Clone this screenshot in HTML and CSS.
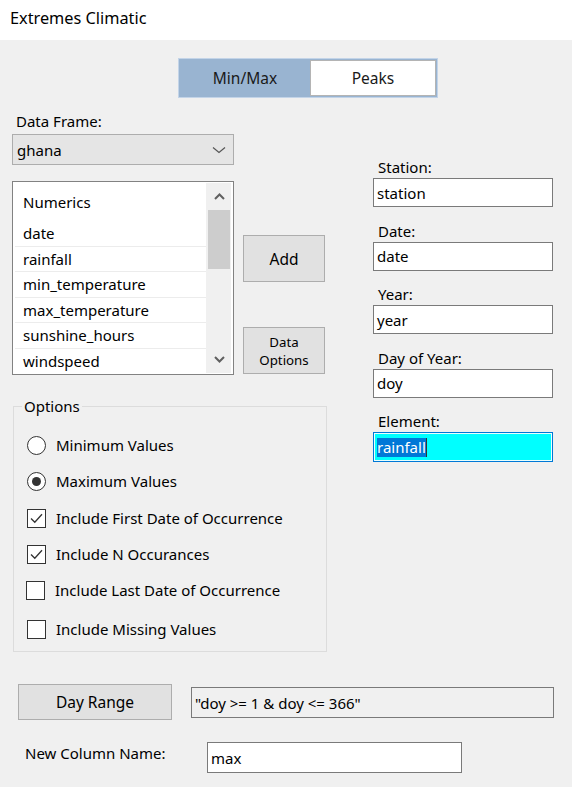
FILE: index.html
```html
<!DOCTYPE html>
<html>
<head>
<meta charset="utf-8">
<link rel="stylesheet" href="styles.css">
</head>
<body>
<div class="window">
  <div class="titlebar">Extremes Climatic</div>
  <div class="client">
    <div class="toggle">
      <div class="tab tab-active">Min/Max</div>
      <div class="tab tab-peaks">Peaks</div>
    </div>
    <div class="main">
      <div class="col-left">
        <div class="label">Data Frame:</div>
        <div class="combo">
          <span>ghana</span>
          <svg class="chev" width="14" height="8" viewBox="0 0 14 8"><path d="M1 1.5 L7 6.5 L13 1.5" fill="none" stroke="#555" stroke-width="1.2"/></svg>
        </div>
        <div class="listbox">
          <div class="list-items">
            <div class="list-header">Numerics</div>
            <div class="item">date</div>
            <div class="item">rainfall</div>
            <div class="item">min_temperature</div>
            <div class="item">max_temperature</div>
            <div class="item">sunshine_hours</div>
            <div class="item item-last">windspeed</div>
          </div>
          <div class="scrollbar">
            <div class="sb-btn"><svg width="11" height="7" viewBox="0 0 11 7"><path d="M1 6 L5.5 1.5 L10 6" fill="none" stroke="#606060" stroke-width="2"/></svg></div>
            <div class="sb-track"><div class="sb-thumb"></div></div>
            <div class="sb-btn"><svg width="11" height="7" viewBox="0 0 11 7"><path d="M1 1 L5.5 5.5 L10 1" fill="none" stroke="#606060" stroke-width="2"/></svg></div>
          </div>
        </div>
        <fieldset class="options">
          <legend>Options</legend>
          <div class="opts">
            <div class="opt"><span class="radio"></span><span>Minimum Values</span></div>
            <div class="opt"><span class="radio radio-on"><span class="dot"></span></span><span>Maximum Values</span></div>
            <div class="opt opt-gap1"><span class="check"><svg width="17" height="17" viewBox="0 0 17 17"><path d="M3 8.5 L6.8 12.3 L14 4.2" fill="none" stroke="#333" stroke-width="1.3"/></svg></span><span>Include First Date of Occurrence</span></div>
            <div class="opt"><span class="check"><svg width="17" height="17" viewBox="0 0 17 17"><path d="M3 8.5 L6.8 12.3 L14 4.2" fill="none" stroke="#333" stroke-width="1.3"/></svg></span><span>Include N Occurances</span></div>
            <div class="opt opt-shift"><span class="check"></span><span>Include Last Date of Occurrence</span></div>
            <div class="opt opt-gap3"><span class="check"></span><span>Include Missing Values</span></div>
          </div>
        </fieldset>
      </div>
      <div class="col-mid">
        <div class="btn btn-add">Add</div>
        <div class="btn btn-opts">Data<br>Options</div>
      </div>
      <div class="col-right">
        <div class="field"><div class="flabel">Station:</div><div class="tbox">station</div></div>
        <div class="field"><div class="flabel">Date:</div><div class="tbox">date</div></div>
        <div class="field"><div class="flabel">Year:</div><div class="tbox">year</div></div>
        <div class="field"><div class="flabel">Day of Year:</div><div class="tbox">doy</div></div>
        <div class="field"><div class="flabel">Element:</div><div class="tbox tbox-focus"><span class="sel">rainfall</span><span class="caret"></span></div></div>
      </div>
    </div>
    <div class="row-range">
      <div class="btn btn-range">Day Range</div>
      <div class="tbox tbox-ro">"doy &gt;= 1 &amp; doy &lt;= 366"</div>
    </div>
    <div class="row-name">
      <div class="name-label">New Column Name:</div>
      <div class="tbox tbox-name">max</div>
    </div>
  </div>
</div>
</body>
</html>
```
FILE: styles.css
```css
* { box-sizing: border-box; }
body {
  margin: 0;
  font-family: "Noto Sans", "Open Sans", sans-serif;
  font-size: 15px;
  color: #000;
  background: #f0f0f0;
}
.window {
  width: 572px;
  height: 787px;
  background: #f0f0f0;
  overflow: hidden;
}
.titlebar {
  height: 40px;
  background: #fff;
  padding-left: 10px;
  font-size: 16.3px;
  line-height: 36px;
}
.client {
  padding-left: 12px;
}
.toggle {
  margin: 18px 0 0 166px;
  width: 260px;
  height: 40px;
  display: flex;
  background: #99b4d1;
  border: 1px solid #c3d4e8;
  padding: 1px;
}
.tab {
  display: flex;
  align-items: center;
  justify-content: center;
  color: #1a1a1a;
  font-size: 15.5px;
}
.tab-active { width: 130px; }
.tab-peaks {
  flex: 1;
  background: #fff;
  border: 1px solid #b4b4b4;
}
.main {
  display: flex;
  align-items: flex-start;
}
.col-left {
  width: 222px;
  padding-top: 13px;
}
.label {
  height: 20px;
  line-height: 20px;
  padding-left: 4px;
}
.combo {
  margin-top: 3px;
  height: 31px;
  border: 1px solid #adadad;
  background: #e5e5e5;
  display: flex;
  align-items: center;
  justify-content: space-between;
  padding: 0 7px 0 4px;
}
.listbox {
  margin-top: 16px;
  height: 194px;
  border: 1px solid #828282;
  background: #fff;
  display: flex;
  padding: 1px 2px 1px 2px;
}
.list-items {
  flex: 1;
  border-right: 1px solid #f0f0f0;
}
.list-header {
  height: 38px;
  line-height: 38px;
  padding-left: 8px;
}
.item {
  height: 25.5px;
  line-height: 24px;
  padding-left: 8px;
  border-bottom: 1px solid #ececec;
}
.item-last { border-bottom: none; }
.scrollbar {
  width: 24px;
  background: #f0f0f0;
  display: flex;
  flex-direction: column;
}
.sb-btn {
  height: 27px;
  display: flex;
  align-items: center;
  justify-content: center;
}
.sb-track {
  flex: 1;
}
.sb-thumb {
  height: 59px;
  margin: 0 1px;
  background: #cdcdcd;
}
.options {
  margin: 21px 0 0 1px;
  width: 314px;
  height: 256px;
  border: 1px solid #dcdcdc;
  padding: 0;
}
.options legend {
  margin-left: 8px;
  padding: 0 2px;
  line-height: 20px;
}
.opts {
  margin-top: 11px;
}
.opt {
  height: 36px;
  display: flex;
  align-items: center;
  padding-left: 13px;
  gap: 10px;
}
.opt-gap1 { margin-top: 1px; }
.opt-gap3 { margin-top: 3px; }
.opt-shift { padding-left: 12px; }
.radio {
  width: 19px;
  height: 19px;
  border: 1px solid #333;
  border-radius: 50%;
  background: #fff;
  display: flex;
  align-items: center;
  justify-content: center;
  flex: none;
}
.dot {
  width: 9px;
  height: 9px;
  border-radius: 50%;
  background: #333;
}
.check {
  width: 19px;
  height: 19px;
  border: 1px solid #333;
  background: #fff;
  flex: none;
  display: flex;
  align-items: center;
  justify-content: center;
}
.col-mid {
  margin-left: 9px;
  width: 82px;
  padding-top: 137px;
}
.btn {
  background: #e1e1e1;
  border: 1px solid #adadad;
  display: flex;
  align-items: center;
  justify-content: center;
  text-align: center;
  color: #000;
}
.btn-add {
  height: 47px;
  font-size: 15.5px;
}
.btn-opts {
  margin-top: 45px;
  height: 47px;
  font-size: 13.3px;
  line-height: 18px;
}
.col-right {
  margin-left: 48px;
  width: 180px;
  padding-top: 58px;
}
.field {
  height: 63.5px;
}
.flabel {
  height: 22px;
  line-height: 22px;
  padding-left: 5px;
}
.tbox {
  height: 29px;
  border: 1px solid #7a7a7a;
  background: #fff;
  display: flex;
  align-items: center;
  padding-left: 3px;
}
.tbox-focus {
  height: 30px;
  border-color: #0078d7;
  background: #00ffff;
  box-shadow: inset 0 0 0 1px #e8ffff;
}
.sel {
  background: #0078d7;
  color: #fff;
  line-height: 19px;
}
.caret {
  width: 1px;
  height: 19px;
  background: #333;
}
.row-range {
  margin-top: 32px;
  display: flex;
  align-items: flex-start;
}
.btn-range {
  margin-left: 6px;
  width: 154px;
  height: 36px;
  font-size: 15.5px;
}
.tbox-ro {
  margin: 3px 0 0 19px;
  width: 363px;
  height: 31px;
  background: #f0f0f0;
}
.row-name {
  margin-top: 22px;
  display: flex;
  align-items: flex-start;
}
.name-label {
  margin-left: 13px;
  width: 182px;
  line-height: 22px;
}
.tbox-name {
  width: 255px;
  height: 31px;
}
```
